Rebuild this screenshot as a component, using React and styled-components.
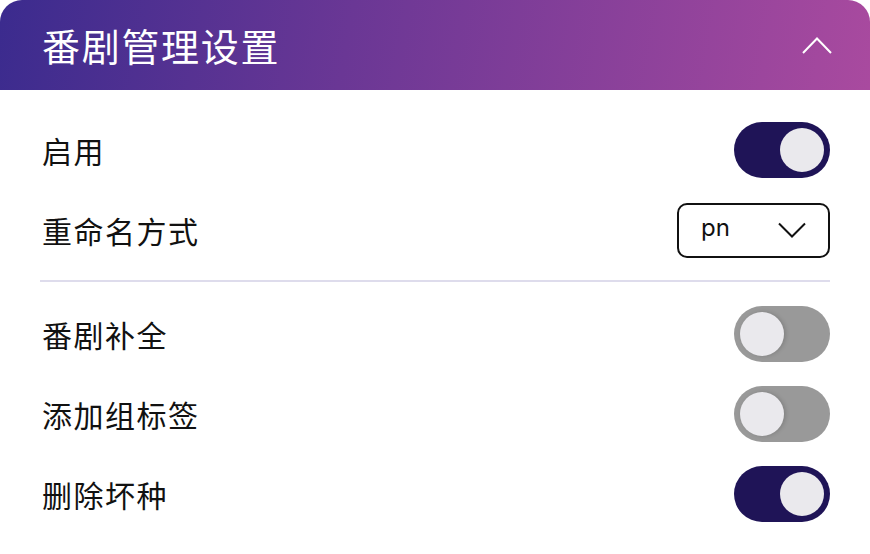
import React, { useState } from "react";
import styled, { createGlobalStyle } from "styled-components";

const Global = createGlobalStyle`
  html, body { margin: 0; padding: 0; background: #ffffff; }
  body { font-family: "Noto Sans CJK SC", "Noto Sans", sans-serif; }
  * { box-sizing: border-box; }
`;

const Panel = styled.div`
  width: 870px;
  height: 554px;
  background: #ffffff;
  display: flex;
  flex-direction: column;
`;

const Header = styled.div`
  height: 90px;
  display: flex;
  align-items: center;
  justify-content: space-between;
  padding: 0 38px 0 42px;
  border-radius: 22px 22px 0 0;
  background: linear-gradient(100deg, #3b2b8e 0%, #6a3795 40%, #a94a9f 100%);
`;

const Title = styled.h1`
  margin: 0;
  color: #ffffff;
  font-size: 38px;
  font-weight: 400;
  line-height: 1;
  letter-spacing: 1.7px;
`;

const Body = styled.div`
  display: flex;
  flex-direction: column;
  padding: 20px 40px 20px 42px;
`;

const Row = styled.div`
  height: 80px;
  display: flex;
  align-items: center;
  justify-content: space-between;
`;

const Label = styled.span`
  font-size: 30px;
  font-weight: 400;
  letter-spacing: 1.5px;
  color: #111111;
  line-height: 1;
`;

const Divider = styled.div`
  height: 2px;
  background: #dedcec;
  margin: 10px 0 12px -2px;
`;

const Track = styled.button`
  width: 96px;
  height: 56px;
  border: none;
  padding: 6px;
  border-radius: 28px;
  background: ${(p) => (p.$on ? "#1f1457" : "#999999")};
  display: flex;
  justify-content: ${(p) => (p.$on ? "flex-end" : "flex-start")};
  align-items: center;
  cursor: pointer;
`;

const Knob = styled.span`
  width: 44px;
  height: 44px;
  border-radius: 50%;
  background: #eae9ed;
  box-shadow: ${(p) => (p.$on ? "none" : "2px 0 4px rgba(0,0,0,0.15)")};
`;

const SelectBox = styled.div`
  width: 153px;
  height: 55px;
  border: 2px solid #111111;
  border-radius: 10px;
  display: flex;
  align-items: center;
  justify-content: space-between;
  padding: 0 22px 0 22px;
  font-family: "Inter", "Noto Sans", sans-serif;
  font-size: 24px;
  color: #111111;
`;

const SelectText = styled.span`
  line-height: 1;
  margin-top: -4px;
`;

function Toggle({ on, onClick }) {
  return (
    <Track $on={on} onClick={onClick}>
      <Knob $on={on} />
    </Track>
  );
}

export default function App() {
  const [state, setState] = useState({
    enable: true,
    complete: false,
    tag: false,
    del: true,
  });
  const flip = (k) => () => setState((s) => ({ ...s, [k]: !s[k] }));

  return (
    <>
      <Global />
      <Panel>
        <Header>
          <Title>番剧管理设置</Title>
          <svg width="30" height="17" viewBox="0 0 30 17" fill="none">
            <path d="M1 16 L15 1.5 L29 16" stroke="#ffffff" strokeWidth="2" />
          </svg>
        </Header>
        <Body>
          <Row>
            <Label>启用</Label>
            <Toggle on={state.enable} onClick={flip("enable")} />
          </Row>
          <Row>
            <Label>重命名方式</Label>
            <SelectBox>
              <SelectText>pn</SelectText>
              <svg width="28" height="16" viewBox="0 0 28 16" fill="none">
                <path d="M1 1.5 L14 14.5 L27 1.5" stroke="#111111" strokeWidth="2" />
              </svg>
            </SelectBox>
          </Row>
          <Divider />
          <Row>
            <Label>番剧补全</Label>
            <Toggle on={state.complete} onClick={flip("complete")} />
          </Row>
          <Row>
            <Label>添加组标签</Label>
            <Toggle on={state.tag} onClick={flip("tag")} />
          </Row>
          <Row>
            <Label>删除坏种</Label>
            <Toggle on={state.del} onClick={flip("del")} />
          </Row>
        </Body>
      </Panel>
    </>
  );
}
